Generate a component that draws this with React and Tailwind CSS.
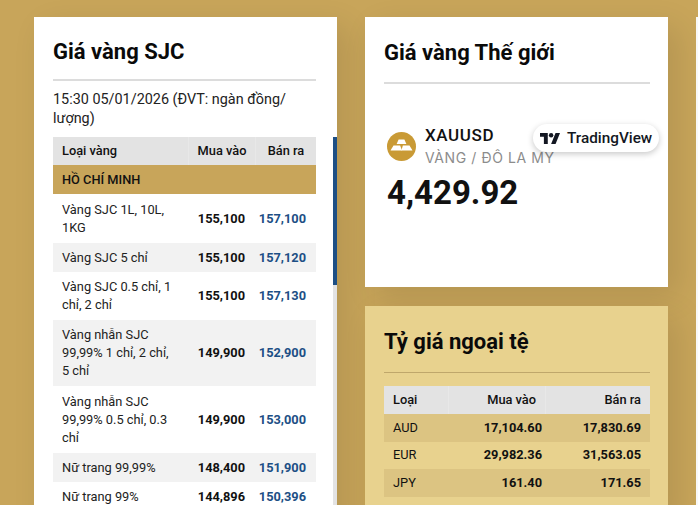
const goldRows = [
  { name: "Vàng SJC 1L, 10L, 1KG", buy: "155,100", sell: "157,100", h: "h-[49px]" },
  { name: "Vàng SJC 5 chỉ", buy: "155,100", sell: "157,120", h: "h-[29px]", alt: true },
  { name: "Vàng SJC 0.5 chỉ, 1 chỉ, 2 chỉ", buy: "155,100", sell: "157,130", h: "h-[48px]" },
  { name: "Vàng nhẫn SJC 99,99% 1 chỉ, 2 chỉ, 5 chỉ", buy: "149,900", sell: "152,900", h: "h-[66px]", alt: true },
  { name: "Vàng nhẫn SJC 99,99% 0.5 chỉ, 0.3 chỉ", buy: "149,900", sell: "153,000", h: "h-[67px]" },
  { name: "Nữ trang 99,99%", buy: "148,400", sell: "151,900", h: "h-[29px]", alt: true },
  { name: "Nữ trang 99%", buy: "144,896", sell: "150,396", h: "h-[29px]" },
];

const rates = [
  { code: "AUD", buy: "17,104.60", sell: "17,830.69", alt: true },
  { code: "EUR", buy: "29,982.36", sell: "31,563.05" },
  { code: "JPY", buy: "161.40", sell: "171.65", alt: true },
];

function GoldIcon() {
  return (
    <svg viewBox="0 0 29 29" className="w-[29px] h-[29px] shrink-0 mt-[7px]">
      <circle cx="14.5" cy="14.5" r="14.5" fill="#c99a35" />
      <path d="M11.6 7.5h5.8l2 4.4h-9.8z" fill="#fff" />
      <path d="M6.5 13.4h6.6l2 5.2H3.5z" fill="#fff" />
      <path d="M15.9 13.4h6.6l3 5.2H14.4z" fill="#fff" />
    </svg>
  );
}

function TvLogo() {
  return (
    <svg viewBox="0 0 36 20" className="w-[20px] h-[11px]" preserveAspectRatio="none">
      <path d="M14 20H7V7H0V0h14v20z" fill="#131722" />
      <circle cx="20" cy="4" r="4" fill="#131722" />
      <path d="M28 20h-8l8-20h8L28 20z" fill="#131722" />
    </svg>
  );
}

export default function App() {
  return (
    <div className="h-[505px] overflow-hidden bg-[#c8a55a] font-['Roboto',sans-serif] text-[#111]">
      <div className="flex items-start gap-[28px] pl-[34px] pt-[17px] w-[1000px]">
        {/* cot gia vang SJC */}
        <div className="w-[303px] h-[520px] shrink-0 bg-white pt-[17px] pl-[19px] shadow-[10px_10px_30px_rgba(0,0,0,0.1)]">
          <h2 className="text-[22px] leading-[36px] font-bold mr-[21px] border-b-2 border-[#dcdcdc] pb-[9px] h-[47px] text-[#0a0a0a]">
            Giá vàng SJC
          </h2>
          <p className="text-[14.4px] leading-[19px] mt-[9px] w-[262px] text-[#222]">
            15:30 05/01/2026 (ĐVT: ngàn đồng/ lượng)
          </p>
          <div className="flex mt-[9px]">
            <div className="w-[263px] shrink-0 text-[12.8px] leading-[18px]">
              <div className="flex items-center h-[28px] bg-[#e3e3e3] font-medium">
                <div className="w-[135px] pl-[9px]">Loại vàng</div>
                <div className="w-[67px] leading-[28px] text-center border-l border-[#e8e8e8]">Mua vào</div>
                <div className="w-[61px] leading-[28px] text-center border-l border-[#e8e8e8]">Bán ra</div>
              </div>
              <div className="flex items-center h-[29px] bg-[#c8a55a] pl-[9px] font-medium">HỒ CHÍ MINH</div>
              {goldRows.map((row) => (
                <div key={row.name + row.sell} className={`flex items-center ${row.h} ${row.alt ? "bg-[#f2f2f2]" : "bg-white"}`}>
                  <div className="w-[135px] pl-[9px] pr-[12px] text-[#222]">{row.name}</div>
                  <div className="w-[67px] pr-[10px] text-right font-bold">{row.buy}</div>
                  <div className="w-[61px] pr-[10px] text-right font-bold text-[#1d4f85]">{row.sell}</div>
                </div>
              ))}
            </div>
            <div className="w-[4px] h-[380px] ml-[17px] bg-[#e3e3e3]">
              <div className="h-[148px] bg-[#1d4f85]" />
            </div>
          </div>
        </div>

        <div className="w-[303px] shrink-0 flex flex-col gap-[19px]">
          {/* gia vang the gioi */}
          <div className="h-[270px] bg-white pt-[17px] pl-[19px] pr-[18px] shadow-[10px_10px_30px_rgba(0,0,0,0.1)]">
            <h2 className="text-[22px] leading-[38px] font-bold h-[50px] border-b-2 border-[#dcdcdc] text-[#0a0a0a]">
              Giá vàng Thế giới
            </h2>
            <div className="relative mt-[41px] pl-[3px]">
              <div className="flex items-start gap-[9px]">
                <GoldIcon />
                <div>
                  <div className="text-[17px] leading-[21px] font-medium tracking-[0.6px]">XAUUSD</div>
                  <div className="text-[14px] leading-[24px] tracking-[0.6px] text-[#8c8c8c] font-['Inter',sans-serif]">VÀNG / ĐÔ LA MỸ</div>
                </div>
              </div>
              <div className="text-[33px] leading-[40px] font-bold mt-[3px]">4,429.92</div>
              <div className="absolute left-[149px] top-[-1px] flex items-center gap-[7px] h-[28px] w-[126px] pl-[7px] bg-white rounded-full shadow-[0_2px_6px_rgba(0,0,0,0.22)]">
                <TvLogo />
                <span className="text-[15.3px] font-medium text-[#131722]">TradingView</span>
              </div>
            </div>
          </div>

          {/* ty gia ngoai te */}
          <div className="h-[210px] bg-[#e8d28e] pt-[17px] pl-[19px] pr-[18px] shadow-[10px_10px_30px_rgba(0,0,0,0.1)]">
            <h2 className="text-[22px] leading-[38px] font-bold h-[50px] border-b border-[#bfa76b] text-[#0a0a0a]">Tỷ giá ngoại tệ</h2>
            <div className="mt-[13px] text-[12.8px] leading-[18px]">
              <div className="flex items-center h-[28px] bg-[#e3e3e3] font-medium">
                <div className="w-[64px] pl-[9px]">Loại</div>
                <div className="w-[97px] pr-[9px] leading-[28px] text-right border-l border-[#e8e8e8]">Mua vào</div>
                <div className="flex-1 pr-[9px] leading-[28px] text-right border-l border-[#e8e8e8]">Bán ra</div>
              </div>
              {rates.map((r) => (
                <div key={r.code} className={`flex items-center h-[27.5px] ${r.alt ? "bg-[#dcc482]" : ""}`}>
                  <div className="w-[64px] pl-[9px]">{r.code}</div>
                  <div className="w-[97px] pr-[3px] text-right font-bold">{r.buy}</div>
                  <div className="flex-1 pr-[9px] text-right font-bold">{r.sell}</div>
                </div>
              ))}
            </div>
          </div>
        </div>

        <div className="w-[300px] h-[520px] bg-[#f8f8f8] shrink-0" />
      </div>
    </div>
  );
}
